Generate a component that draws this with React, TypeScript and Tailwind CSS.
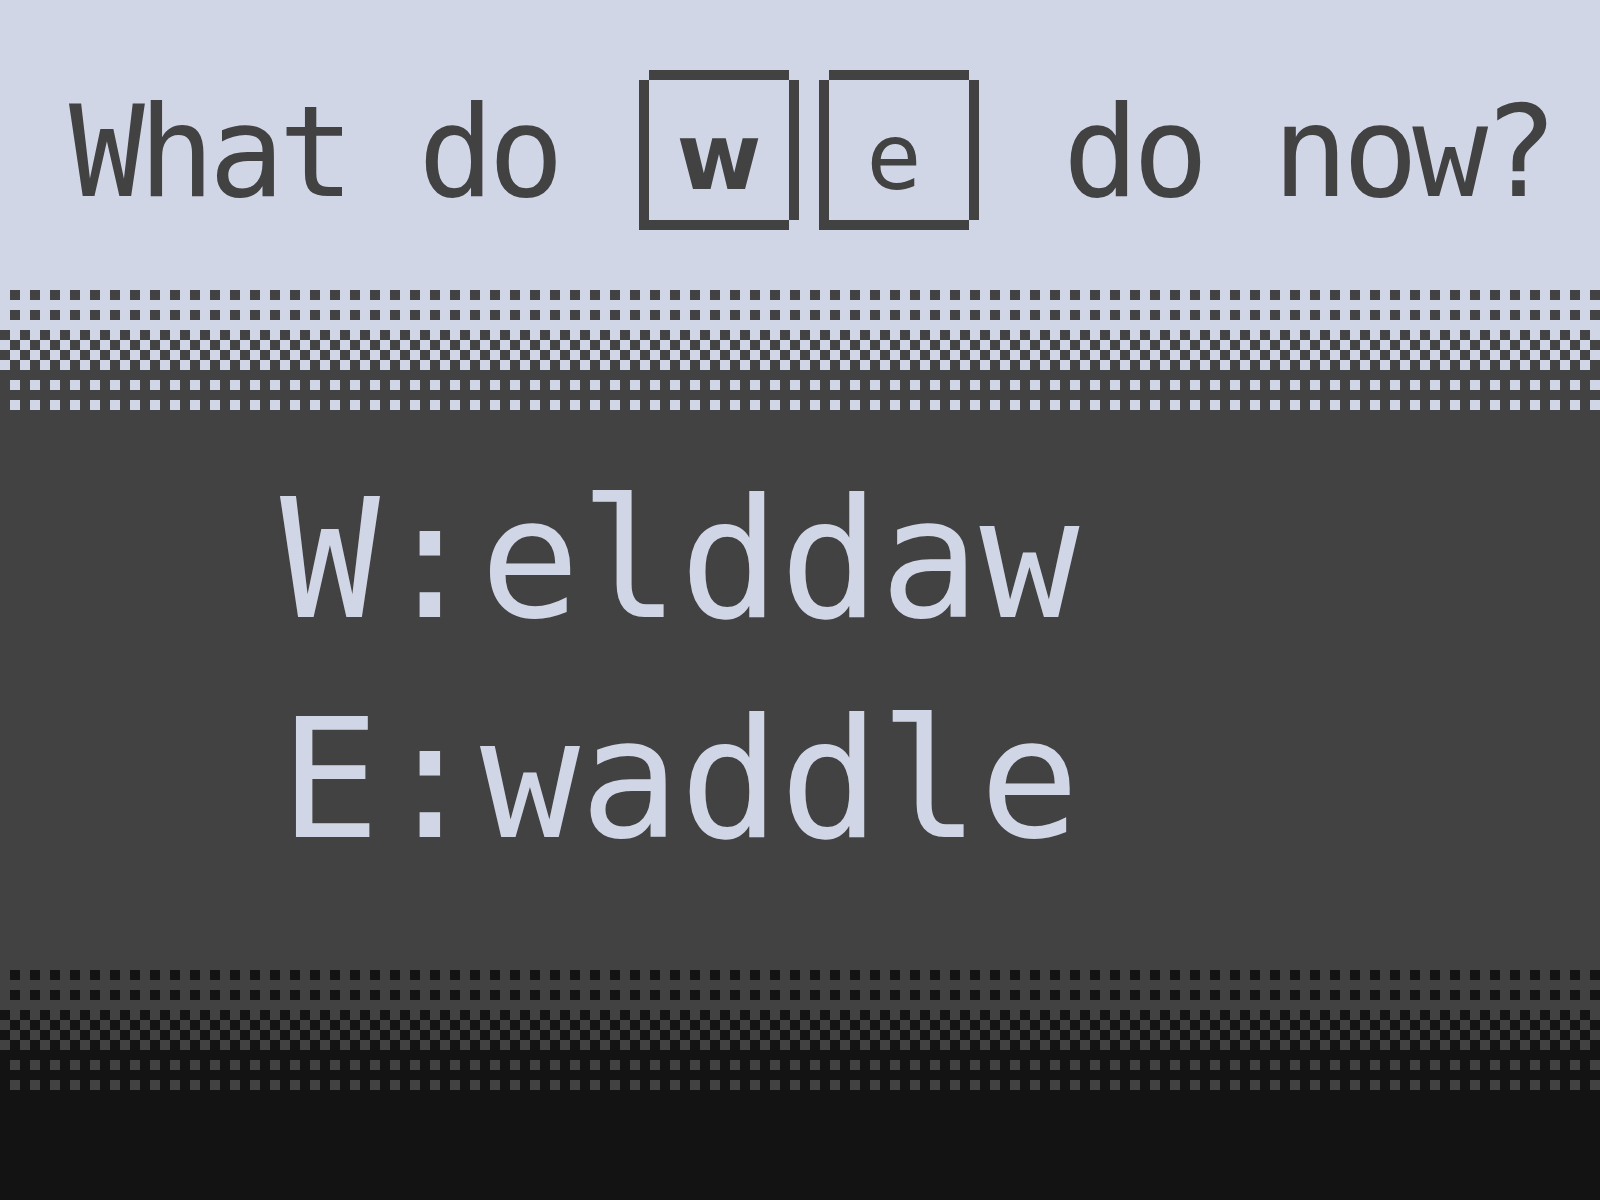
import React from "react";

// ─── Palette ──────────────────────────────────────────────────────────────────

const LIGHT = "#d1d6e6";
const DARK = "#424242";
const BLACK = "#131313";

// ─── Dither band (two-colour ordered fade, 10px "pixels") ─────────────────────

const DitherBand = ({ id, top, bottom }: { id: string; top: string; bottom: string }) => (
    <svg className="block w-full h-[120px]" shapeRendering="crispEdges">
        <defs>
            <pattern id={id} width="20" height="120" patternUnits="userSpaceOnUse">
                <rect x="0" y="0" width="20" height="40" fill={top} />
                <rect x="10" y="0" width="10" height="10" fill={bottom} />
                <rect x="10" y="20" width="10" height="10" fill={bottom} />
                <rect x="0" y="40" width="20" height="40" fill={top} />
                <rect x="0" y="40" width="10" height="10" fill={bottom} />
                <rect x="10" y="50" width="10" height="10" fill={bottom} />
                <rect x="0" y="60" width="10" height="10" fill={bottom} />
                <rect x="10" y="70" width="10" height="10" fill={bottom} />
                <rect x="0" y="80" width="20" height="40" fill={bottom} />
                <rect x="10" y="90" width="10" height="10" fill={top} />
                <rect x="10" y="110" width="10" height="10" fill={top} />
            </pattern>
        </defs>
        <rect width="100%" height="120" fill={`url(#${id})`} />
    </svg>
);

// ─── Key cap ──────────────────────────────────────────────────────────────────

const KeyCap = ({ children }: { children: React.ReactNode }) => (
    <div className="relative w-[160px] h-[160px] border-[10px] border-[#424242] flex justify-center items-end pb-[16px]">
        <span className="absolute -top-[10px] -left-[10px] w-[10px] h-[10px] bg-[#d1d6e6]" />
        <span className="absolute -top-[10px] -right-[10px] w-[10px] h-[10px] bg-[#d1d6e6]" />
        <span className="absolute -bottom-[10px] -right-[10px] w-[10px] h-[10px] bg-[#d1d6e6]" />
        {children}
    </div>
);

// ─── Screen ───────────────────────────────────────────────────────────────────

export default function App() {
    return (
        <div className="w-[1600px] h-[1200px] overflow-hidden font-['DejaVu_Sans_Mono',monospace] bg-[#131313]">
            {/* prompt */}
            <div className="h-[290px] bg-[#d1d6e6] text-[#424242] flex items-start pt-[70px] pl-[69px]">
                <span className="text-[126px] leading-[126px] tracking-[-6px] mt-[20px] whitespace-pre">What do</span>
                <div className="flex gap-[20px] ml-[81px]">
                    <KeyCap>
                        <span className="font-['DejaVu_Sans',sans-serif] text-[92px] leading-[92px] font-bold">w</span>
                    </KeyCap>
                    <KeyCap>
                        <span className="text-[92px] leading-[92px] mr-[10px]">e</span>
                    </KeyCap>
                </div>
                <span className="text-[126px] leading-[126px] tracking-[-6px] mt-[20px] ml-[84px] whitespace-pre">do now?</span>
            </div>

            <DitherBand id="fadeTop" top={LIGHT} bottom={DARK} />

            {/* options */}
            <div className="h-[560px] bg-[#424242] text-[#d1d6e6] pl-[280px] pt-[40px]">
                <div className="text-[166px] leading-[220px]">W:elddaw</div>
                <div className="text-[166px] leading-[220px]">E:waddle</div>
            </div>

            <DitherBand id="fadeBottom" top={DARK} bottom={BLACK} />

            <div className="h-[110px] bg-[#131313]" />
        </div>
    );
}
